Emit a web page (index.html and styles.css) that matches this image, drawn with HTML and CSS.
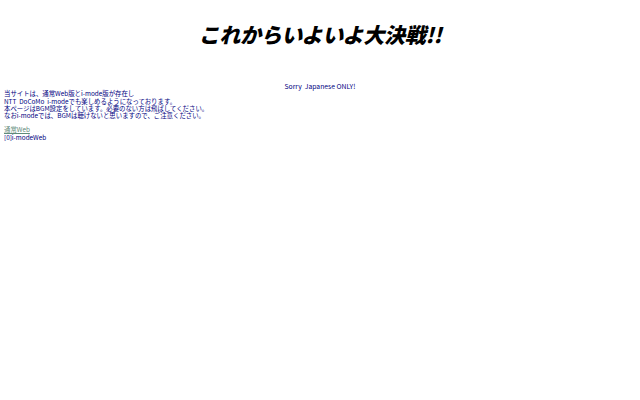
FILE: index.html
```html
<!DOCTYPE html>
<html lang="ja">
<head>
<meta charset="utf-8">
<title>これからいよいよ大決戦!!</title>
<link rel="stylesheet" href="styles.css">
</head>
<body>
<div class="page">
  <h1 class="title">これからいよいよ大決戦!!</h1>
  <p class="sorry">Sorry&nbsp;&nbsp;Japanese ONLY!</p>
  <p class="intro">当サイトは、通常Web版とi-mode版が存在し<br>NTT&nbsp;&nbsp;DoCoMo&nbsp;&nbsp;i-modeでも楽しめるようになっております。<br>本ページはBGM設定をしています。必要のない方は飛ばしてください。<br>なおi-modeでは、BGMは聴けないと思いますので、ご注意ください。</p>
  <p class="links"><a class="visited" href="#">通常Web</a><br><a href="#">[0]i-modeWeb</a></p>
</div>
</body>
</html>
```
FILE: styles.css
```css
html, body {
  margin: 0;
  padding: 0;
  background: #ffffff;
}
.page {
  padding: 0 4px;
  font-family: "Noto Sans CJK JP", "Liberation Sans", sans-serif;
  color: #000080;
  font-size: 6.4px;
  line-height: 7.3px;
}
.title {
  margin: 0;
  padding-top: 19px;
  height: 31px;
  text-align: center;
  font-size: 21px;
  line-height: 30px;
  font-weight: 900;
  font-style: italic;
  color: #000000;
  letter-spacing: -0.3px;
}
.sorry {
  margin: 33px 0 0 0;
  text-align: center;
  font-size: 6.8px;
}
.intro {
  margin: 0;
}
.links {
  margin: 7px 0 0 0;
}
.links a {
  color: #000080;
}
.links a.visited {
  color: #5f8a7a;
}
```
